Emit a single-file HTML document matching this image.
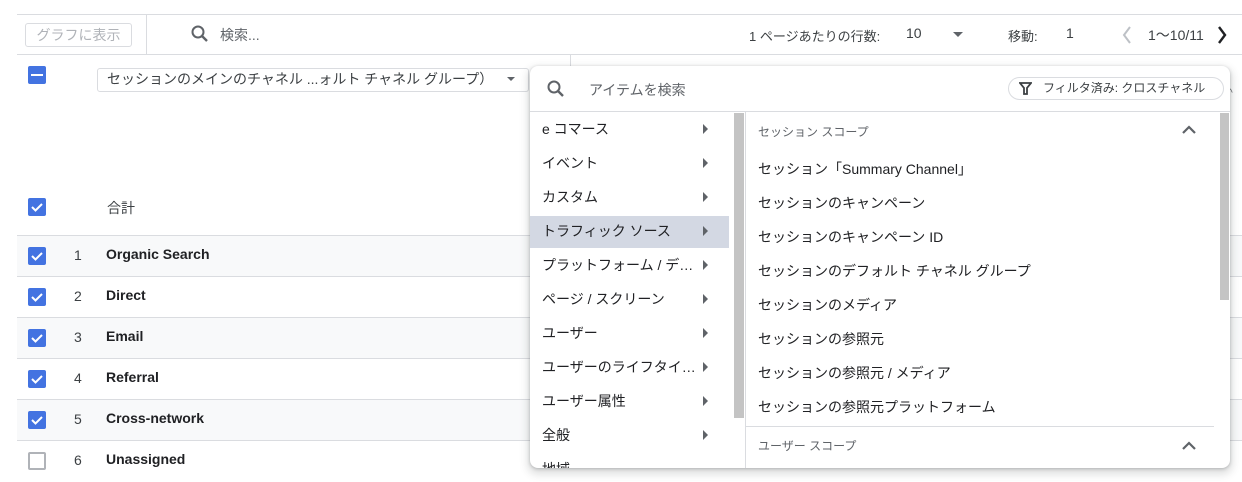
<!DOCTYPE html>
<html><head><meta charset="utf-8"><style>
*{box-sizing:border-box;margin:0;padding:0}
body{width:1242px;height:476px;overflow:hidden;background:#fff;font-family:"Liberation Sans","Noto Sans CJK JP",sans-serif;color:#3c4043;position:relative;font-size:13px}
.a{position:absolute}
.hl{position:absolute;height:1px;background:#dadce0}
.vl{position:absolute;width:1px;background:#dadce0}
.cb{position:absolute;left:28px;width:18px;height:18px;border-radius:2px;background:#4373e1}
.cb svg{position:absolute;left:2px;top:2px}
.cbe{background:#fff;border:2px solid #b0b3b8}
.row{position:absolute;left:17px;width:1225px;height:41px;border-bottom:1px solid #dadce0}
.row .n{position:absolute;left:57px;top:11px;font-size:14px}
.row .t{position:absolute;left:89px;top:10px;font-size:14px;font-weight:bold;color:#202124}
.li{position:absolute;left:12px;font-size:14px;color:#202124}
.arr{position:absolute;left:173px;width:0;height:0;border-top:5px solid transparent;border-bottom:5px solid transparent;border-left:5px solid #5f6368}
.ri{position:absolute;left:228px;font-size:14px;color:#202124}
</style></head><body>
<div class="hl" style="left:17px;top:14px;width:1225px"></div>
<div class="hl" style="left:17px;top:54px;width:1225px"></div>
<div class="vl" style="left:146px;top:14px;height:40px"></div>
<div class="vl" style="left:570px;top:54px;height:12px"></div>
<div class="a" style="left:25px;top:23px;width:107px;height:24px;border:1px solid #dadce0;border-radius:3px;color:#b0b3b8;font-size:14px;text-align:center;line-height:22px">グラフに表示</div>
<svg class="a" style="left:190px;top:24px" width="20" height="20" viewBox="0 0 20 20"><circle cx="8" cy="8" r="5.5" fill="none" stroke="#5f6368" stroke-width="2"/><path d="M12 12l5 5" stroke="#5f6368" stroke-width="2.4"/></svg>
<div class="a" style="left:220px;top:25px;font-size:14px;color:#5f6368">検索...</div>
<div class="a" style="left:749px;top:26px;font-size:13px;color:#3c4043">1 ページあたりの行数:</div>
<div class="a" style="left:906px;top:25px;font-size:14px">10</div>
<div class="a" style="left:953px;top:32px;border-left:5px solid transparent;border-right:5px solid transparent;border-top:5px solid #5f6368"></div>
<div class="a" style="left:1008px;top:26px;font-size:13px">移動:</div>
<div class="a" style="left:1066px;top:25px;font-size:14px">1</div>
<svg class="a" style="left:1120px;top:25px" width="14" height="20"><path d="M10 2L4 10l6 8" fill="none" stroke="#bdc1c6" stroke-width="2"/></svg>
<div class="a" style="left:1148px;top:25px;font-size:14px">1〜10/11</div>
<svg class="a" style="left:1215px;top:25px" width="14" height="20"><path d="M4 2l6 8-6 8" fill="none" stroke="#202124" stroke-width="2.4"/></svg>

<div class="cb" style="top:66px"><div class="a" style="left:3px;top:8px;width:12px;height:2px;background:#fff"></div></div>
<div class="a" style="left:97px;top:68px;width:432px;height:24px;border:1px solid #dadce0;border-radius:3px;font-size:14px;line-height:21px;padding-left:9px;color:#3c4043">セッションのメインのチャネル ...ォルト チャネル グループ）</div>
<div class="a" style="left:507px;top:77px;border-left:4px solid transparent;border-right:4px solid transparent;border-top:4px solid #5f6368"></div>
<div class="cb" style="top:198px"><svg width="14" height="14"><path d="M2 7l3.5 3.5L12 4" fill="none" stroke="#fff" stroke-width="2"/></svg></div>
<div class="a" style="left:107px;top:198px;font-size:14px">合計</div>
<div class="hl" style="left:17px;top:235px;width:1225px"></div>

<div class="row" style="top:236px;background:#f8f9fa"><div class="n">1</div><div class="t">Organic Search</div></div>
<div class="row" style="top:277px"><div class="n">2</div><div class="t">Direct</div></div>
<div class="row" style="top:318px;background:#f8f9fa"><div class="n">3</div><div class="t">Email</div></div>
<div class="row" style="top:359px"><div class="n">4</div><div class="t">Referral</div></div>
<div class="row" style="top:400px;background:#f8f9fa"><div class="n">5</div><div class="t">Cross-network</div></div>
<div class="row" style="top:441px;border:0"><div class="n">6</div><div class="t">Unassigned</div></div>
<div class="cb" style="top:247px"><svg width="14" height="14"><path d="M2 7l3.5 3.5L12 4" fill="none" stroke="#fff" stroke-width="2"/></svg></div>
<div class="cb" style="top:288px"><svg width="14" height="14"><path d="M2 7l3.5 3.5L12 4" fill="none" stroke="#fff" stroke-width="2"/></svg></div>
<div class="cb" style="top:329px"><svg width="14" height="14"><path d="M2 7l3.5 3.5L12 4" fill="none" stroke="#fff" stroke-width="2"/></svg></div>
<div class="cb" style="top:370px"><svg width="14" height="14"><path d="M2 7l3.5 3.5L12 4" fill="none" stroke="#fff" stroke-width="2"/></svg></div>
<div class="cb" style="top:411px"><svg width="14" height="14"><path d="M2 7l3.5 3.5L12 4" fill="none" stroke="#fff" stroke-width="2"/></svg></div>
<div class="cb cbe" style="top:452px"></div>
<div class="a" style="left:1228px;top:88px;font-size:10px;color:#5f6368">^</div>

<div class="a" style="left:530px;top:66px;width:700px;height:402px;background:#fff;border-radius:8px;box-shadow:0 1px 3px rgba(60,64,67,.3),0 4px 8px 3px rgba(60,64,67,.15);overflow:hidden">
 <svg class="a" style="left:16px;top:13px" width="20" height="20" viewBox="0 0 20 20"><circle cx="8" cy="8" r="5.5" fill="none" stroke="#5f6368" stroke-width="2"/><path d="M12 12l5 5" stroke="#5f6368" stroke-width="2.4"/></svg>
 <div class="a" style="left:59px;top:14px;font-size:14px;color:#5f6368">アイテムを検索</div>
 <div class="a" style="left:478px;top:11px;width:216px;height:23px;border:1px solid #dadce0;border-radius:12px;font-size:12px;line-height:21px;padding-left:34px;color:#3c4043">フィルタ済み: クロスチャネル</div>
 <svg class="a" style="left:489px;top:16px" width="13" height="13"><path d="M1 1h11L8 6v6H5V6z" fill="none" stroke="#3c4043" stroke-width="1.8"/></svg>
 <div class="hl" style="left:0;top:45px;width:700px"></div>
 <div class="a" style="left:0;top:150px;width:199px;height:32px;background:#d3d8e3"></div>
 <div class="li" style="top:53px">e コマース</div><div class="arr" style="top:58px"></div>
 <div class="li" style="top:87px">イベント</div><div class="arr" style="top:92px"></div>
 <div class="li" style="top:121px">カスタム</div><div class="arr" style="top:126px"></div>
 <div class="li" style="top:155px">トラフィック ソース</div><div class="arr" style="top:160px"></div>
 <div class="li" style="top:189px">プラットフォーム / デ…</div><div class="arr" style="top:194px"></div>
 <div class="li" style="top:223px">ページ / スクリーン</div><div class="arr" style="top:228px"></div>
 <div class="li" style="top:257px">ユーザー</div><div class="arr" style="top:262px"></div>
 <div class="li" style="top:291px">ユーザーのライフタイ…</div><div class="arr" style="top:296px"></div>
 <div class="li" style="top:325px">ユーザー属性</div><div class="arr" style="top:330px"></div>
 <div class="li" style="top:359px">全般</div><div class="arr" style="top:364px"></div>
 <div class="li" style="top:393px">地域</div>
 <div class="a" style="left:204px;top:47px;width:10px;height:305px;background:#c4c4c4"></div>
 <div class="vl" style="left:215px;top:46px;height:356px"></div>
 <div class="a" style="left:690px;top:47px;width:9px;height:187px;background:#c4c4c4"></div>
 <div class="ri" style="top:57px;font-size:12px;color:#5f6368">セッション スコープ</div>
 <svg class="a" style="left:651px;top:59px" width="16" height="10"><path d="M2 8l6-6 6 6" fill="none" stroke="#5f6368" stroke-width="2.2"/></svg>
 <div class="ri" style="top:93px">セッション「Summary Channel」</div>
 <div class="ri" style="top:127px">セッションのキャンペーン</div>
 <div class="ri" style="top:161px">セッションのキャンペーン ID</div>
 <div class="ri" style="top:195px">セッションのデフォルト チャネル グループ</div>
 <div class="ri" style="top:229px">セッションのメディア</div>
 <div class="ri" style="top:263px">セッションの参照元</div>
 <div class="ri" style="top:297px">セッションの参照元 / メディア</div>
 <div class="ri" style="top:331px">セッションの参照元プラットフォーム</div>
 <div class="hl" style="left:216px;top:360px;width:468px"></div>
 <div class="ri" style="top:371px;font-size:12px;color:#5f6368">ユーザー スコープ</div>
 <svg class="a" style="left:651px;top:375px" width="16" height="10"><path d="M2 8l6-6 6 6" fill="none" stroke="#5f6368" stroke-width="2.2"/></svg>
</div>
</body></html>
